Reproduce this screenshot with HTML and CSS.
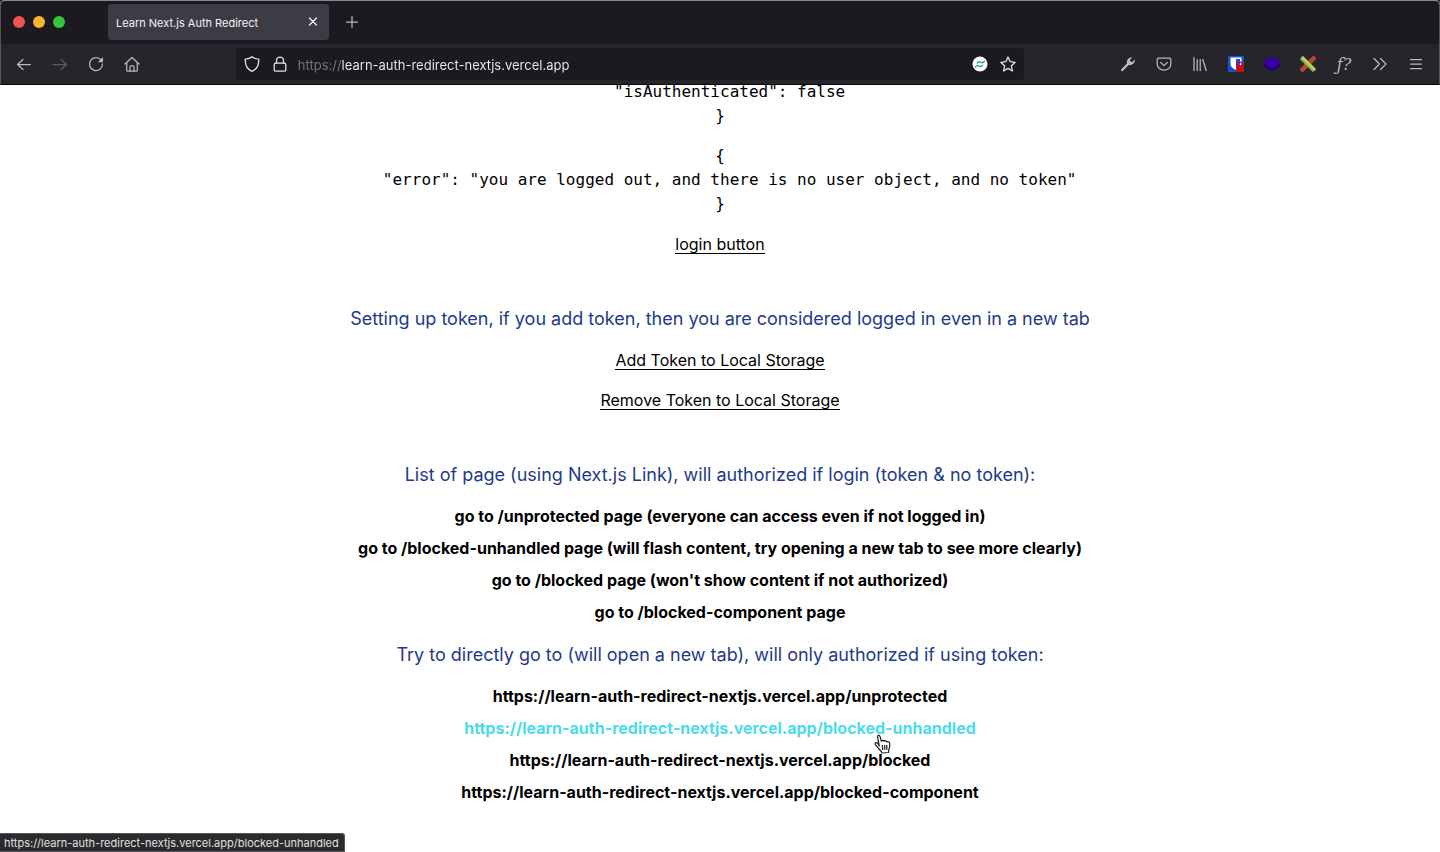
FILE: index.html
```html
<!DOCTYPE html>
<html lang="en">
<head>
<meta charset="utf-8">
<title>Learn Next.js Auth Redirect</title>
<link rel="stylesheet" href="styles.css">
</head>
<body>
<div class="window">
  <header class="chrome">
    <div class="tabbar">
      <div class="lights">
        <button class="light light-close" aria-label="Close window"></button>
        <button class="light light-min" aria-label="Minimize window"></button>
        <button class="light light-max" aria-label="Maximize window"></button>
      </div>
      <div class="tab">
        <span class="tab-title">Learn Next.js Auth Redirect</span>
        <button class="tab-close" aria-label="Close tab"><svg width="10" height="10" viewBox="0 0 10 10"><path d="M1.500 1l7 7M8.500 1l-7 7"/></svg></button>
      </div>
      <button class="new-tab" aria-label="New tab"><svg width="14" height="14" viewBox="0 0 14 14"><path d="M7 1.500v11M1.500 7h11"/></svg></button>
    </div>
    <div class="toolbar">
      <nav class="tools" aria-label="Navigation">
        <button class="tool" aria-label="Back"><svg width="16" height="16" viewBox="0 0 16 16"><path d="M14.500 8.500H1.500M7 3.500L1.500 8.500L7 13.500"/></svg></button>
        <button class="tool" disabled aria-label="Forward"><svg width="16" height="16" viewBox="0 0 16 16"><path d="M1 8.500h13.500M9 3.500l5.500 5L9 13.500"/></svg></button>
        <button class="tool" aria-label="Reload"><svg width="16" height="16" viewBox="0 0 16 16"><path d="M13.200 4.200A6.500 6.500 0 1 0 14.500 8"/><path class="fill" d="M15 1v5.200h-5.200z"/></svg></button>
        <button class="tool" aria-label="Home"><svg width="16" height="16" viewBox="0 0 16 16"><path d="M1 8l7-6.500L15 8M2.700 6.800v7.400q0 1 1 1h8.600q1 0 1-1V6.800M6 15v-4q0-1.500 2-1.500t2 1.500v4"/></svg></button>
      </nav>
      <div class="space"></div>
      <div class="urlbar">
        <button class="url-tool" aria-label="Tracking protection"><svg width="16" height="16" viewBox="0 0 16 16"><path d="M8 .8C6.500 2.300 4 3 1.300 3.100C1 8 2.500 13 8 15.400C13.500 13 15 8 14.700 3.100C12 3 9.500 2.300 8 .8z"/></svg></button>
        <button class="url-tool" aria-label="Site information"><svg width="16" height="16" viewBox="0 0 16 16"><rect x="2.200" y="7.200" width="11.600" height="8" rx="1.500"/><path d="M4.500 7V4.500a3.500 3.500 0 0 1 7 0V7"/></svg></button>
        <input class="url-input" type="text" aria-label="Address" value="https://learn-auth-redirect-nextjs.vercel.app">
        <button class="url-tool" aria-label="Tailwind site"><svg width="16" height="16" viewBox="0 0 16 16"><circle cx="8" cy="8" r="7.500" fill="#fff" stroke="none"/><path stroke="#3f9db5" stroke-width="1.500" d="M5.200 7c1.500-2.200 2.800-1.200 3.800-.6s2 .4 3.200-1M3.600 10.800c1.500-2.200 2.800-1.200 3.800-.6s2 .4 3.200-1"/></svg></button>
        <button class="url-tool" aria-label="Bookmark"><svg width="16" height="16" viewBox="0 0 16 16"><path d="M8 1l2.100 4.700 5.100.6-3.800 3.500 1 5.200L8 12.400 3.600 15l1-5.200L.8 6.300l5.100-.6z"/></svg></button>
      </div>
      <div class="space"></div>
      <div class="tools">
        <button class="tool" aria-label="Developer tools"><svg width="16" height="16" viewBox="0 0 16 16"><path class="fill" d="M1.200 13.200L7 7.400C6.300 4.200 8.500 1 12.300 1.200L10 3.700l.4 1.900 2 .3 2.400-2.300C15.400 7 12 9.800 8.700 9L2.900 14.900C1.700 15.700.4 14.400 1.200 13.200z"/></svg></button>
        <button class="tool" aria-label="Pocket"><svg width="16" height="16" viewBox="0 0 16 16"><path d="M2.500 2.200h11q1.300 0 1.300 1.300V8c0 8-13.600 8-13.600 0V3.500q0-1.300 1.300-1.300zM4.700 6.500L8 9.600l3.300-3.100"/></svg></button>
        <button class="tool" aria-label="Library"><svg width="16" height="16" viewBox="0 0 16 16"><path d="M2 1.500v13M5.200 3.500v11M8.200 3.500v11M10.800 3.500l3.400 11"/></svg></button>
        <button class="tool" aria-label="Password manager"><svg width="16" height="16" viewBox="0 0 16 16"><path fill="#1551d3" stroke="none" d="M0 0h16v16H0z"/><path fill="#fff" stroke="none" d="M2.500 1.500h11V8c0 3-2.500 4.500-5.500 6C5 12.500 2.500 11 2.500 8z"/><path fill="#1551d3" stroke="none" d="M8 3h4v5c0 2-2 3-4 4z"/><rect x="8" y="9" width="8" height="7" rx="1" fill="#c90d18" stroke="none"/><path stroke="#c90d18" stroke-width="1.500" d="M9.800 9V7.800q0-1.500 2.200-1.500t2.200 1.500V9"/></svg></button>
        <button class="tool" aria-label="Container extension"><svg width="16" height="16" viewBox="0 0 16 16"><path fill="#24017c" stroke="none" d="M.5 4.500L8 .5l7.500 4v6.500L8 15.500.5 11z"/><path fill="#3d00a5" stroke="none" d="M0 5.500L8 .5l8 5v2L8 12 0 7.500z"/></svg></button>
        <button class="tool" aria-label="Cross extension"><svg width="16" height="16" viewBox="0 0 16 16"><path stroke="#b9452b" stroke-width="4.500" stroke-linecap="butt" d="M15 1L1 15"/><path stroke="#91b941" stroke-width="4.500" stroke-linecap="butt" d="M1.500 1.500l13 13"/><path stroke="#c8dc77" stroke-width="1.500" d="M2.200 1.200l12.600 12.600"/></svg></button>
        <button class="tool tool-text" aria-label="Font finder">ƒ?</button>
        <button class="tool" aria-label="More tools"><svg width="16" height="16" viewBox="0 0 16 16"><path d="M2 2.500L7.500 8 2 13.500M8.500 2.500L14 8l-5.500 5.500"/></svg></button>
        <button class="tool" aria-label="Menu"><svg width="16" height="16" viewBox="0 0 16 16"><path d="M2.500 3.500h11M2.500 8h11M2.500 12.500h11"/></svg></button>
      </div>
    </div>
  </header>
  <main class="page">
    <pre class="code">  "isAuthenticated": false
}</pre>
    <pre class="code">{
  "error": "you are logged out, and there is no user object, and no token"
}</pre>
    <button class="action">login button</button>
    <h2 class="heading heading-spaced">Setting up token, if you add token, then you are considered logged in even in a new tab</h2>
    <button class="action">Add Token to Local Storage</button>
    <button class="action">Remove Token to Local Storage</button>
    <h2 class="heading heading-spaced">List of page (using Next.js Link), will authorized if login (token &amp; no token):</h2>
    <ul class="links">
      <li><a href="#unprotected">go to /unprotected page (everyone can access even if not logged in)</a></li>
      <li><a href="#blocked-unhandled">go to /blocked-unhandled page (will flash content, try opening a new tab to see more clearly)</a></li>
      <li><a href="#blocked">go to /blocked page (won't show content if not authorized)</a></li>
      <li><a href="#blocked-component">go to /blocked-component page</a></li>
    </ul>
    <h2 class="heading">Try to directly go to (will open a new tab), will only authorized if using token:</h2>
    <ul class="links">
      <li><a href="#unprotected">https://learn-auth-redirect-nextjs.vercel.app/unprotected</a></li>
      <li><a class="hovered" href="#blocked-unhandled">https://learn-auth-redirect-nextjs.vercel.app/blocked-unhandled</a><svg class="cursor" width="18" height="20" viewBox="0 0 18 20"><path d="M5.300 12L3.600 3.200C3.200 1 5.600.6 6.100 2.600L7.300 7.200C8 5.900 9.600 6 10 7.200C11 6.300 12.400 6.800 12.700 7.900C14 7.200 15.500 7.800 15.700 9.300C16 12 16 13.500 14.700 15.500L14.500 18.500L7.800 19C7.400 17 5.500 15.500 3.500 13.200L1.500 10.800C.3 9 2.200 7.800 3.700 9.300z"/><path d="M8.300 11.500l.4 4M10.600 11.300l.2 4M12.800 11.300v4"/></svg></li>
      <li><a href="#blocked">https://learn-auth-redirect-nextjs.vercel.app/blocked</a></li>
      <li><a href="#blocked-component">https://learn-auth-redirect-nextjs.vercel.app/blocked-component</a></li>
    </ul>
  </main>
  <div class="status">https://learn-auth-redirect-nextjs.vercel.app/blocked-unhandled</div>
</div>
</body>
</html>
```
FILE: styles.css
```css
* { box-sizing: border-box; }
body { margin: 0; background: #1c1b22; font-family: Inter, "Liberation Sans", sans-serif; }
button { margin: 0; padding: 0; border: 0; background: none; color: inherit; font: inherit; }
svg { display: block; fill: none; stroke: currentColor; stroke-width: 1.25; stroke-linecap: round; stroke-linejoin: round; }
.fill { fill: currentColor; stroke: none; }

.window { position: relative; display: flex; flex-direction: column; height: 100vh; overflow: hidden; background: #fff; border-radius: 5px 5px 0 0; }
.chrome { flex: none; background: #26252c; color: #b9b8bf; border: 1px solid #55545c; border-top-color: #88888e; border-bottom-color: #08080a; border-radius: 5px 5px 0 0; }

.tabbar { display: flex; align-items: center; height: 43px; padding-bottom: 1px; background: #1b1a20; border-radius: 4px 4px 0 0; }
.lights { display: flex; gap: 8px; width: 107px; padding-left: 12px; }
.light { width: 12px; height: 12px; border-radius: 50%; }
.light-close { background: #f2524d; }
.light-min { background: #f8b42e; }
.light-max { background: #35c53a; }
.tab { display: flex; align-items: center; justify-content: space-between; width: 221px; height: 36px; padding: 0 10px 0 8px; border-radius: 4px; background: #3d3b45; color: #f4f4f6; }
.tab-title { padding-top: 1px; font-size: 11px; }
.tab-close { padding: 1px; }
.new-tab { margin-left: 16px; }

.toolbar { display: flex; align-items: center; height: 40px; padding: 0 5px; }
.tools { display: flex; }
.tool { display: flex; align-items: center; justify-content: center; width: 36px; height: 32px; }
.tool:disabled { color: #5b5a62; }
.tool-text { font: italic 16px "DejaVu Serif", serif; }
.space { flex: 1 0 0; }
.urlbar { display: flex; align-items: center; flex: 9 0 0; height: 32px; padding: 0 8px; gap: 12px; border-radius: 4px; background: #1b1a20; color: #e6e5ea; }
.url-input { flex: 1; min-width: 0; height: 28px; margin-left: -2px; padding: 2px 0 0; border: 0; outline: 0; font-family: inherit; font-size: 13px; color: transparent; background: linear-gradient(to right, #77767e 44px, #f2f2f5 44px); -webkit-background-clip: text; background-clip: text; }

.page { flex: 1; min-height: 0; display: flex; flex-direction: column; justify-content: flex-end; align-items: center; gap: 16px; padding-bottom: 48px; overflow: hidden; color: #000; font-size: 16px; line-height: 24px; text-align: center; }
.code { margin: 0; font-family: "DejaVu Sans Mono", monospace; font-size: 16px; line-height: 24px; }
.action { height: 24px; padding: 0; line-height: 24px; text-align: center; text-decoration: none; background: linear-gradient(#000, #000) 0 21px / 100% 1px no-repeat; }
.heading { margin: 0; padding-top: 2px; color: #1e3a8a; font-size: 18px; font-weight: 400; line-height: 26px; }
.heading-spaced { margin-top: 32px; }
.links { display: flex; flex-direction: column; gap: 8px; margin: 0; padding: 0; list-style: none; }
.links li { position: relative; }
.links a { color: inherit; font-weight: 700; text-decoration: none; }
.links .hovered { color: #4ddbeb; }
.cursor { position: absolute; left: 413px; top: 18px; z-index: 1; fill: #fff; stroke: #222; }
.links .cursor { left: calc(50% + 154px); }

.status { position: absolute; left: 0; bottom: 0; padding: 2px 5px 0 4px; border: 1px solid #55555a; border-left: 0; border-radius: 0 3px 0 0; background: #2b2a2c; color: #e0e0e0; font-size: 11px; line-height: 15px; }
```
